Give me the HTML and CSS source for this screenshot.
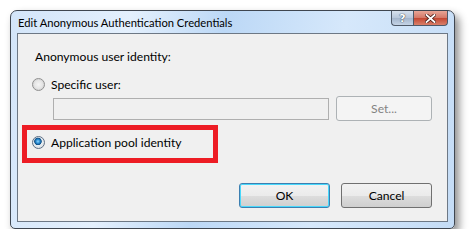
FILE: index.html
```html
<!DOCTYPE html>
<html lang="en">
<head>
    <meta charset="UTF-8">
    <title>Edit Anonymous Authentication Credentials</title>
    <link rel="stylesheet" href="styles.css">
</head>
<body>
    <div class="window">
        <div class="titlebar">
            <span class="title">Edit Anonymous Authentication Credentials</span>
            <div class="caption-buttons">
                <span class="cap-btn help">?</span>
                <span class="cap-btn close">
                    <svg width="11" height="9" viewBox="0 0 11 9">
                        <path d="M1.5 1 L9.5 8 M9.5 1 L1.5 8" stroke="#4a1d17" stroke-width="3.4" stroke-linecap="square"/>
                        <path d="M1.5 1 L9.5 8 M9.5 1 L1.5 8" stroke="#ffffff" stroke-width="1.8" stroke-linecap="square"/>
                    </svg>
                </span>
            </div>
        </div>
        <div class="client">
            <div class="heading">Anonymous user identity:</div>
            <label class="radio-row">
                <input type="radio" name="identity">
                <span>Specific user:</span>
            </label>
            <div class="user-row">
                <input type="text" class="textbox" disabled>
                <button class="btn" disabled>Set...</button>
            </div>
            <div class="highlight">
                <label class="radio-row">
                    <input type="radio" name="identity" checked>
                    <span>Application pool identity</span>
                </label>
            </div>
            <div class="actions">
                <button class="btn default">OK</button>
                <button class="btn">Cancel</button>
            </div>
        </div>
    </div>
</body>
</html>
```

FILE: styles.css
```css
body {
    margin: 0;
    background: #ffffff;
    font-family: Lato, "Noto Sans", sans-serif;
    font-size: 12.1px;
    color: #000000;
}

.window {
    margin: 10px 0 0 10px;
    width: 445px;
    height: 219px;
    box-sizing: border-box;
    border: 1px solid #3f4650;
    border-radius: 7px 7px 5px 5px;
    background: linear-gradient(100deg, #d3e5f9 0%, #e4f0fd 25%, #bcd8f6 45%, #d6e8fb 70%, #c4dcf6 100%);
    box-shadow: 4px 5px 9px rgba(0, 0, 0, 0.45);
    padding: 0 6px 6px 6px;
    display: flex;
    flex-direction: column;
}

.titlebar {
    height: 22px;
    display: flex;
    align-items: flex-start;
}

.title {
    margin: 4px 0 0 1px;
    line-height: 15px;
    font-size: 11.2px;
    color: #000000;
}

.caption-buttons {
    margin-left: auto;
    display: flex;
}

.cap-btn {
    height: 14px;
    border: 1px solid #4e5968;
    border-top: none;
    display: flex;
    align-items: center;
    justify-content: center;
}

.help {
    width: 21px;
    border-radius: 0 0 0 4px;
    border-right: none;
    background: linear-gradient(#d6e1ee, #b6c6da 50%, #a3b5cc 51%, #c5d4e6);
    font-family: "DejaVu Sans", sans-serif;
    font-size: 11px;
    font-weight: bold;
    color: #ffffff;
    text-shadow: 0 0 1px #2d3a4a, 0 0 1px #2d3a4a;
}

.close {
    width: 33px;
    border-radius: 0 0 4px 0;
    background: linear-gradient(#e8a596, #d47766 50%, #c34631 51%, #d9806a);
}

.client {
    flex: 1;
    border: 1px solid #6d7885;
    background: #f0f0f0;
    padding: 15px 15px 0 17px;
}

.heading {
    line-height: 15px;
    margin-bottom: 13px;
}

.radio-row {
    display: flex;
    align-items: center;
    gap: 6px;
    line-height: 15px;
}

.radio-row input {
    appearance: none;
    margin: 0 0 0 -3px;
    width: 13px;
    height: 13px;
    border-radius: 50%;
    border: 1px solid #8f8f8f;
    box-sizing: border-box;
    background: radial-gradient(circle at 50% 50%, #f4f4f4 0, #e6e6e6 50%, #d9d9d9 65%, #ffffff 100%);
}

.radio-row input:checked {
    border-color: #5c6e84;
    background: radial-gradient(circle at 45% 40%, #8ed8ff 0, #2a8bd1 22%, #0f4f86 38%, #e9eef2 46%, #dfe3e6 70%, #ffffff 100%);
}

.user-row {
    display: flex;
    align-items: center;
    margin: 4px 0 0 18px;
}

.textbox {
    width: 276px;
    height: 22px;
    box-sizing: border-box;
    border: 1px solid #afafaf;
    background: #f0f0f0;
    margin: 0;
}

.btn {
    height: 25px;
    box-sizing: border-box;
    border: 1px solid #707070;
    border-radius: 3px;
    background: linear-gradient(#f2f2f2, #ebebeb 50%, #dddddd 51%, #cfcfcf);
    font-family: inherit;
    font-size: 12.1px;
    color: #000000;
    padding: 0;
}

.user-row .btn {
    width: 96px;
    margin-left: 7px;
}

.btn:disabled {
    border-color: #adb2b5;
    background: #f4f4f4;
    color: #838383;
}

.highlight {
    margin: 4px 0 0 -13px;
    width: 196px;
    height: 38px;
    box-sizing: border-box;
    border: 5px solid #ed1c24;
    padding: 0 0 4px 8px;
    display: flex;
    align-items: center;
}

.actions {
    display: flex;
    justify-content: flex-end;
    gap: 11px;
    margin-top: 20px;
}

.actions .btn {
    width: 91px;
}

.btn.default {
    border-color: #3c7fb1;
    box-shadow: inset 0 0 0 1px #48d8fb;
}
```
